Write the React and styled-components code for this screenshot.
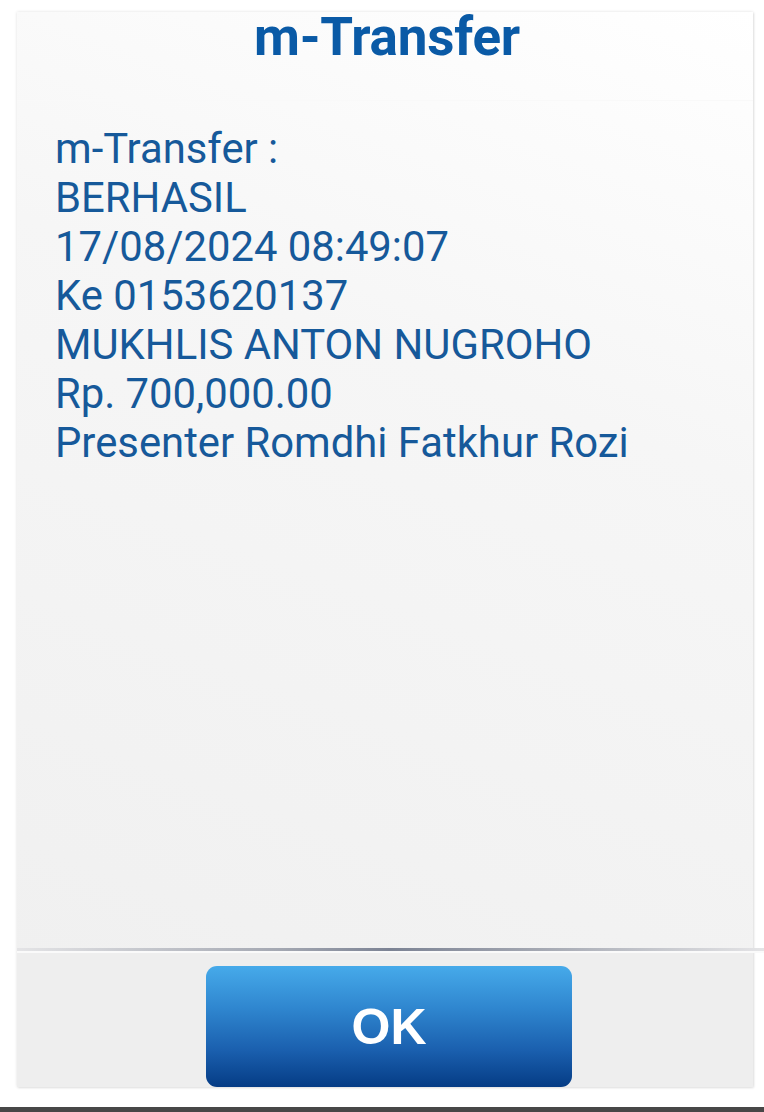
import React from 'react';
import styled, { createGlobalStyle } from 'styled-components';

const GlobalStyle = createGlobalStyle`
  html, body {
    margin: 0;
    padding: 0;
    background: #ffffff;
  }
  body {
    font-family: Roboto, 'Liberation Sans', sans-serif;
  }
`;

const Screen = styled.div`
  width: 764px;
  height: 1112px;
  display: flex;
  flex-direction: column;
  overflow: hidden;
`;

const Dialog = styled.div`
  margin: 12px 11px 0 17px;
  height: 1075px;
  display: flex;
  flex-direction: column;
  background: linear-gradient(200deg, #ffffff 0%, #f6f6f6 35%, #efefef 100%);
  box-shadow: 0 0 3px rgba(0, 0, 0, 0.12), 1px 1px 2px rgba(0, 0, 0, 0.08);
`;

const TitleBar = styled.div`
  height: 88px;
  display: flex;
  align-items: flex-start;
  justify-content: center;
  border-bottom: 1px solid #f9f9f9;
`;

const Title = styled.h1`
  margin: -1px 0 0 4px;
  font-family: Roboto, 'Liberation Sans', sans-serif;
  font-weight: 700;
  font-size: 53px;
  line-height: 53px;
  letter-spacing: -0.2px;
  color: #0a5aa6;
`;

const Body = styled.div`
  flex: 1;
  padding: 23px 0 0 38px;
`;

const Line = styled.div`
  font-size: 41.8px;
  line-height: 49px;
  color: #16599a;
  white-space: nowrap;
`;

const Divider = styled.div`
  height: 3px;
  margin-right: -11px;
  background: linear-gradient(90deg, #e4e4e6 0%, #a4a8b2 35%, #7c8394 50%, #a4a8b2 70%, #e4e4e6 100%);
  border-bottom: 2px solid #fafafa;
`;

const Footer = styled.div`
  height: 134px;
  display: flex;
  justify-content: center;
  padding-top: 13px;
  box-sizing: border-box;
  background: #eeeeee;
`;

const OkButton = styled.button`
  width: 366px;
  height: 121px;
  margin-left: 8px;
  border: none;
  border-radius: 11px;
  background: linear-gradient(180deg, #46aaea 0%, #2f86cf 35%, #1a5fae 70%, #053c85 100%);
  color: #ffffff;
  font-family: 'Liberation Sans', Arial, sans-serif;
  font-weight: 700;
  font-size: 50px;
  cursor: pointer;
`;

const BottomBar = styled.div`
  margin-top: auto;
  height: 5px;
  background: #474747;
`;

const lines = [
  'm-Transfer :',
  'BERHASIL',
  '17/08/2024 08:49:07',
  'Ke 0153620137',
  'MUKHLIS ANTON NUGROHO',
  'Rp. 700,000.00',
  'Presenter Romdhi Fatkhur Rozi',
];

export default function App() {
  return (
    <Screen>
      <GlobalStyle />
      <Dialog>
        <TitleBar>
          <Title>m-Transfer</Title>
        </TitleBar>
        <Body>
          {lines.map((text) => (
            <Line key={text}>{text}</Line>
          ))}
        </Body>
        <Divider />
        <Footer>
          <OkButton>OK</OkButton>
        </Footer>
      </Dialog>
      <BottomBar />
    </Screen>
  );
}
